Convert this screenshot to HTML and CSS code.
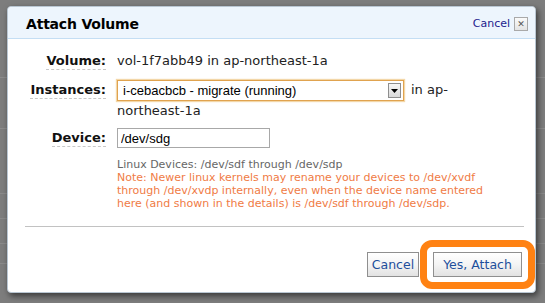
FILE: index.html
```html
<!DOCTYPE html>
<html lang="en">
<head>
    <meta charset="UTF-8">
    <title>Attach Volume</title>
    <link rel="stylesheet" href="styles.css">
</head>
<body>
    <div class="dialog">
        <div class="header">
            <h1 class="title">Attach Volume</h1>
            <div class="header-actions">
                <a href="#" class="link-cancel">Cancel</a>
                <span class="close">&#x2715;</span>
            </div>
        </div>
        <div class="content">
            <div class="form">
                <div class="label"><span>Volume:</span></div>
                <div class="value">vol-1f7abb49 in ap-northeast-1a</div>

                <div class="label"><span>Instances:</span></div>
                <div class="value">
                    <div class="select">
                        <span class="select-text">i-cebacbcb - migrate (running)</span>
                        <span class="select-arrow">
                            <svg width="7" height="4" viewBox="0 0 7 4"><path d="M0 0h7L3.5 4z" fill="#000"/></svg>
                        </span>
                    </div><span class="region">in ap-northeast-1a</span>
                </div>

                <div class="label label-device"><span>Device:</span></div>
                <div class="value value-device">
                    <input type="text" class="input" value="/dev/sdg">
                    <div class="help">
                        <div class="help-devices">Linux Devices: /dev/sdf through /dev/sdp</div>
                        <div class="help-note">Note: Newer linux kernels may rename your devices to /dev/xvdf through /dev/xvdp internally, even when the device name entered here (and shown in the details) is /dev/sdf through /dev/sdp.</div>
                    </div>
                </div>
            </div>
            <hr class="divider">
            <div class="buttons">
                <button class="btn btn-cancel">Cancel</button>
                <div class="btn-wrap">
                    <button class="btn btn-attach">Yes, Attach</button>
                    <span class="highlight"></span>
                </div>
            </div>
        </div>
    </div>
</body>
</html>
```

FILE: styles.css
```css
body {
    margin: 0;
    height: 303px;
    overflow: hidden;
    font-family: 'DejaVu Sans', Verdana, sans-serif;
    background:
        linear-gradient(#8c8c8c, #8c8c8c) 0 77px / 100% 1px no-repeat,
        linear-gradient(#8c8c8c, #8c8c8c) 0 128px / 100% 1px no-repeat,
        linear-gradient(#8a8a8a, #8a8a8a) 0 193px / 100% 1px no-repeat,
        linear-gradient(#8a8a8a, #8a8a8a) 0 218px / 100% 1px no-repeat,
        linear-gradient(#8a8a8a, #8a8a8a) 0 243px / 100% 1px no-repeat,
        linear-gradient(#8a8a8a, #8a8a8a) 0 263px / 100% 1px no-repeat,
        #7d7d7d;
    padding-top: 6px;
    box-sizing: border-box;
}
.dialog {
    margin-left: 7px;
    width: 529px;
    height: 287px;
    background: #fff;
    border: 1px solid #b9c6d2;
    border-radius: 4px;
    box-sizing: border-box;
    box-shadow: 2px 3px 6px rgba(0, 0, 0, 0.55);
}
.header {
    height: 32px;
    display: flex;
    align-items: center;
    justify-content: space-between;
    padding: 2px 7px 0 18px;
    box-sizing: border-box;
    background: #edf5fd;
    border-bottom: 1px solid #c4def4;
    border-radius: 4px 4px 0 0;
}
.title {
    margin: 0;
    font-size: 14px;
    font-weight: bold;
    letter-spacing: -0.2px;
    color: #000;
}
.header-actions {
    display: flex;
    align-items: center;
    gap: 4px;
}
.link-cancel {
    font-size: 11px;
    color: #1c1c8e;
    text-decoration: none;
}
.close {
    width: 12px;
    height: 12px;
    border: 1px solid #a9a9a9;
    background: linear-gradient(#fafafa, #e4e4e4);
    font-size: 9px;
    line-height: 12px;
    text-align: center;
    color: #555;
    font-weight: bold;
}
.content {
    padding-top: 12px;
}
.form {
    display: grid;
    grid-template-columns: 98px 1fr;
    column-gap: 11px;
    row-gap: 9px;
    padding-right: 36px;
    font-size: 13px;
    color: #222;
}
.label {
    text-align: right;
    font-weight: bold;
    line-height: 20px;
    color: #111;
}
.label span {
    border-bottom: 1px dashed #c8c8c8;
    padding-bottom: 1px;
}
.value {
    line-height: 20px;
}
.select {
    display: inline-flex;
    align-items: center;
    justify-content: space-between;
    vertical-align: top;
    width: 287px;
    height: 21px;
    margin-right: 7px;
    border: 1px solid #e0a34f;
    box-shadow: 0 0 1px 1px #f3d7a8;
    box-sizing: border-box;
    padding: 0 2px 0 5px;
    font-family: 'Liberation Sans', Arial, sans-serif;
    font-size: 13px;
    color: #000;
    background: #fff;
}
.select-arrow {
    width: 13px;
    height: 15px;
    border: 1px solid #8e8e8e;
    background: linear-gradient(#f7f7f7, #d9d9d9);
    display: flex;
    align-items: center;
    justify-content: center;
    box-sizing: border-box;
}
.label-device {
    margin-top: -2px;
}
.value-device {
    margin-top: -2px;
}
.input {
    display: block;
    width: 153px;
    height: 20px;
    box-sizing: border-box;
    border: 1px solid #a8a8a8;
    padding: 0 3px;
    margin: 0;
    font-family: 'Liberation Sans', Arial, sans-serif;
    font-size: 13px;
    color: #000;
}
.help {
    margin-top: 10px;
    font-size: 11px;
    line-height: 13px;
}
.help-devices {
    color: #666;
}
.help-note {
    color: #f07b45;
}
.divider {
    margin: 16px 11px 0 17px;
    border: none;
    border-top: 1px solid #c2c2c2;
}
.buttons {
    display: flex;
    justify-content: flex-end;
    gap: 14px;
    padding: 25px 13px 0 0;
}
.btn {
    height: 25px;
    padding: 0;
    border: 1px solid #8f8f8f;
    background: linear-gradient(#ffffff, #f4f4f4 50%, #e2e2e2);
    font-family: 'DejaVu Sans', Verdana, sans-serif;
    font-size: 12.5px;
    color: #1d4f9c;
}
.btn-cancel {
    width: 52px;
}
.btn-attach {
    width: 89px;
}
.btn-wrap {
    position: relative;
    display: flex;
}
.highlight {
    position: absolute;
    left: -13px;
    top: -12px;
    width: 115px;
    height: 49px;
    box-sizing: border-box;
    border: 7px solid #ff8213;
    border-radius: 12px;
}
```
